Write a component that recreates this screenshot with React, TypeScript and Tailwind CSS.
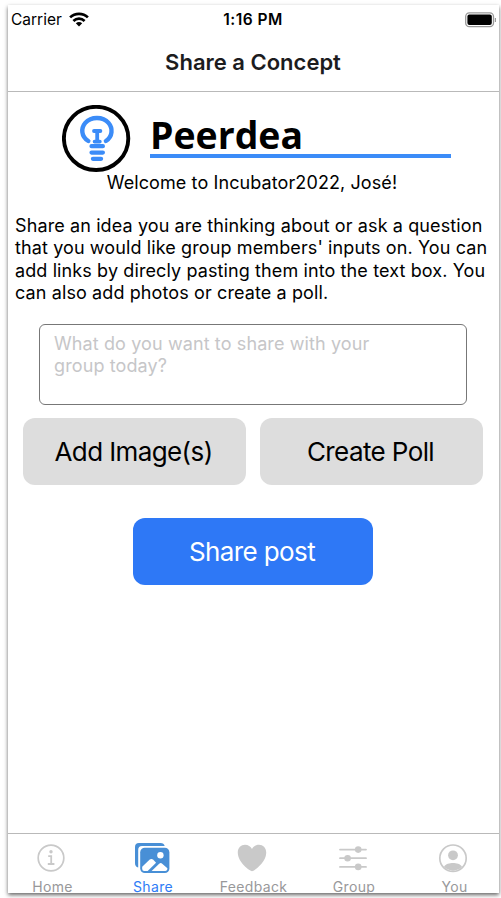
import type { ReactNode } from "react";

function WifiIcon() {
  return (
    <svg className="ml-[7px] h-[15px] w-5" viewBox="0 0 20 15" fill="none" stroke="#000" strokeWidth="2.7">
      <path d="M1.1 5.4C6 .7 14 .7 18.9 5.4" />
      <path d="M4.4 8.9C7.6 5.9 12.4 5.9 15.6 8.9" />
      <path d="M6.8 11.2Q10 8.8 13.2 11.2L10 14.6Z" fill="#000" stroke="none" />
    </svg>
  );
}

function BatteryIcon() {
  return (
    <svg className="h-4 w-8" viewBox="0 0 32 16">
      <rect x=".7" y=".9" width="27.8" height="13.8" rx="3.6" fill="#fff" stroke="#999" strokeWidth="1.3" />
      <rect x="2.4" y="2.6" width="24.4" height="10.4" rx="2" fill="#000" />
      <path d="M30.4 6v4" stroke="#999" strokeWidth="1.2" />
    </svg>
  );
}

function BulbLogo() {
  return (
    <svg className="h-[68px] w-[69px] shrink-0" viewBox="0 0 69 68" fill="none" strokeLinecap="round">
      <ellipse cx="34.1" cy="33.4" rx="32.2" ry="31.6" stroke="#000" strokeWidth="3.9" />
      <g stroke="#3b8cf8">
        <path d="M26.3 36C19 31.4 18.8 23.2 23.3 17.9C29.1 11.3 40.9 11.3 46.5 17.9C51 23.2 50.8 31.4 43.9 36" strokeWidth="4.4" />
        <path d="M32 26h6.4M35.2 26v10M32.6 36.6h5.2" strokeWidth="3.8" />
        <path d="M29.5 41.2h11.4M29.5 47.6h11.4M30.9 53.8h8.2" strokeWidth="4.2" />
      </g>
    </svg>
  );
}

function HomeIcon() {
  return (
    <svg className="h-8 w-8" viewBox="0 0 32 32" fill="none" stroke="#c9c9c9">
      <circle cx="16" cy="16" r="12.8" strokeWidth="1.7" />
      <circle cx="16" cy="9.8" r="1.7" fill="#c9c9c9" stroke="none" />
      <path d="M13.2 14.1h3v7.3M12.8 22h6.6" strokeWidth="1.8" />
    </svg>
  );
}

function ShareIcon() {
  return (
    <svg className="h-8 w-9" viewBox="0 0 36 32">
      <path d="M4.2 25.4Q1 25 1 21V5Q1 1 5 1H26.5Q30 1 30.7 4H8Q4.2 4 4.2 8Z" fill="#488fd6" />
      <rect x="6.2" y="5.7" width="29.2" height="25.4" rx="4.6" fill="#488fd6" />
      <circle cx="26.4" cy="13.3" r="3.2" fill="#fff" />
      <path d="M8.2 27V24.8L15.5 17.8Q17.4 16.2 19.3 17.8L22.1 20.7L13.7 28.9H10.2Q8.2 28.9 8.2 27Z" fill="#fff" />
      <path d="M17.6 28.9L25.2 21.8Q26.7 20.4 28.2 21.7L33.4 26.2Q33.4 28.9 31.2 28.9Z" fill="#fff" />
    </svg>
  );
}

function HeartIcon() {
  return (
    <svg className="h-8 w-8" viewBox="0 0 32 32">
      <path d="M16 29.2C14.3 29.2 2 20.8 1.8 11C1.6 5.8 5 2.8 9 2.8C12.2 2.8 14.7 4.5 16 7C17.3 4.5 19.8 2.8 23 2.8C27 2.8 30.4 5.8 30.2 11C30 20.8 17.7 29.2 16 29.2Z" fill="#c9c9c9" />
    </svg>
  );
}

function GroupIcon() {
  return (
    <svg className="h-8 w-8" viewBox="0 0 32 32" stroke="#c9c9c9" strokeWidth="1.8" strokeLinecap="round" fill="#c9c9c9">
      <path d="M3 7.6h26M3 16.2h26M3 24.9h26" />
      <g stroke="none">
        <circle cx="21.2" cy="7.6" r="3.3" />
        <circle cx="10.6" cy="16.2" r="3.3" />
        <circle cx="21.2" cy="24.9" r="3.3" />
      </g>
    </svg>
  );
}

function YouIcon() {
  return (
    <svg className="h-8 w-8" viewBox="0 0 32 32" fill="#c9c9c9">
      <circle cx="16" cy="16.2" r="13.2" fill="none" stroke="#c9c9c9" strokeWidth="1.7" />
      <circle cx="16" cy="13.3" r="4.9" />
      <path d="M7 24.8C8.4 22 12.8 21 16 21S23.6 22 25 24.8A12.5 12.5 0 0 1 7 24.8Z" />
    </svg>
  );
}

function Tab({ icon, label, active = false }: { icon: ReactNode; label: string; active?: boolean }) {
  return (
    <div className={`flex w-[100.5px] shrink-0 flex-col items-center pt-[8px] text-[14px] leading-[12px] tracking-[0.35px] ${active ? "text-[#2e7cf6]" : "text-[#98989a]"}`}>
      <div className="flex h-8 items-center pr-[2px]">{icon}</div>
      <span className="mt-[7px] pl-px">{label}</span>
    </div>
  );
}

export default function App() {
  return (
    <div className="h-[898px] w-[501px] overflow-hidden bg-white pt-[5px] pl-2 font-['Inter',sans-serif] text-black">
      <div className="flex h-[888px] w-[491px] flex-col overflow-hidden bg-white shadow-[0_2px_4px_0_rgba(0,0,0,0.6)]">
        <div className="grid h-[29px] shrink-0 grid-cols-3 items-center">
          <div className="flex items-center pl-[3px] text-[15.5px]">
            Carrier
            <WifiIcon />
          </div>
          <div className="pr-px text-center text-[15.5px] font-semibold tracking-[0.45px]">1:16 PM</div>
          <div className="flex justify-end pr-[2px]">
            <BatteryIcon />
          </div>
        </div>
        <header className="flex h-[58px] shrink-0 items-center justify-center border-b border-[#b9b9b9] pr-px text-[22px] font-semibold text-[#1c1c1e]">
          <h1>Share a Concept</h1>
        </header>
        <main className="flex grow flex-col">
          <div className="flex h-[80px] pt-[13px] pl-[54px]">
            <BulbLogo />
            <div className="ml-[19px] flex h-[53px] w-[301px] flex-col justify-end border-b-4 border-[#3b8cf8] font-['Open_Sans',sans-serif] text-[37.4px] leading-[39px] font-bold">
              Peerdea
            </div>
          </div>
          <p className="pr-[3px] text-center text-[18px] leading-[22px] tracking-[0.1px]">Welcome to Incubator2022, José!</p>
          <p className="mt-[21px] pl-[7px] text-[18px] leading-[22.3px] tracking-[0.11px] whitespace-nowrap">
            Share an idea you are thinking about or ask a question
            <br />
            that you would like group members' inputs on. You can
            <br />
            add links by direcly pasting them into the text box. You
            <br />
            can also add photos or create a poll.
          </p>
          <div className="mt-[20px] ml-[31px] h-[81px] w-[428px] rounded-[6px] border-[1.5px] border-[#777] pt-[8px] pl-[14px] text-[18px] leading-[22.3px] tracking-[0.11px] text-[#c6c6c8]">
            What do you want to share with your
            <br />
            group today?
          </div>
          <div className="mt-[13px] flex gap-[14px] pl-[15px] text-[26px] tracking-[-0.6px]">
            <button className="h-[67px] w-[223px] rounded-[12px] bg-[#ddd] pr-[2px]">Add Image(s)</button>
            <button className="h-[67px] w-[223px] rounded-[12px] bg-[#ddd] pr-[2px]">Create Poll</button>
          </div>
          <button className="mt-[33px] ml-[125px] h-[67px] w-[240px] rounded-[12px] bg-[#2e78f6] pr-[2px] text-[26px] tracking-[-0.6px] text-white">Share post</button>
        </main>
        <nav className="flex h-[60px] shrink-0 justify-center border-t border-[#b9b9b9] pr-px">
          <Tab icon={<HomeIcon />} label="Home" />
          <Tab icon={<ShareIcon />} label="Share" active />
          <Tab icon={<HeartIcon />} label="Feedback" />
          <Tab icon={<GroupIcon />} label="Group" />
          <Tab icon={<YouIcon />} label="You" />
        </nav>
      </div>
    </div>
  );
}
